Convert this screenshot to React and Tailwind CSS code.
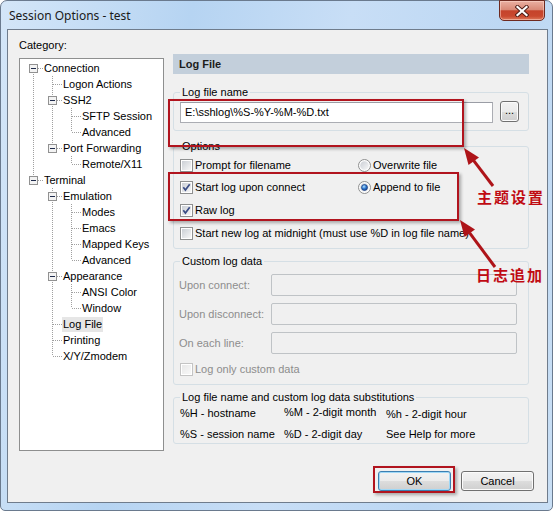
import React, { useId } from "react";

const tree = [
  { t: "Connection", l: 0, anc: [], first: true, next: true, box: true },
  { t: "Logon Actions", l: 1, anc: [true], next: true },
  { t: "SSH2", l: 1, anc: [true], next: true, box: true },
  { t: "SFTP Session", l: 2, anc: [true, true], next: true },
  { t: "Advanced", l: 2, anc: [true, true], next: false },
  { t: "Port Forwarding", l: 1, anc: [true], next: false, box: true },
  { t: "Remote/X11", l: 2, anc: [true, false], next: false },
  { t: "Terminal", l: 0, anc: [], next: false, box: true },
  { t: "Emulation", l: 1, anc: [false], next: true, box: true },
  { t: "Modes", l: 2, anc: [false, true], next: true },
  { t: "Emacs", l: 2, anc: [false, true], next: true },
  { t: "Mapped Keys", l: 2, anc: [false, true], next: true },
  { t: "Advanced", l: 2, anc: [false, true], next: false },
  { t: "Appearance", l: 1, anc: [false], next: true, box: true },
  { t: "ANSI Color", l: 2, anc: [false, true], next: true },
  { t: "Window", l: 2, anc: [false, true], next: false },
  { t: "Log File", l: 1, anc: [false], next: true, sel: true },
  { t: "Printing", l: 1, anc: [false], next: true },
  { t: "X/Y/Zmodem", l: 1, anc: [false], next: false },
];

const DOT = "#a0a0a0";

function TreeRow({ r }) {
  const W = 23 + 19 * r.l;
  const x0 = 13 + 19 * r.l + 0.5;
  return (
    <div className="flex h-4 items-center">
      <svg width={W} height={16} className="flex-none" shapeRendering="crispEdges">
        {r.anc.map((c, i) =>
          c ? (
            <line key={i} x1={13 + 19 * i + 0.5} y1={0} x2={13 + 19 * i + 0.5} y2={16} stroke={DOT} strokeDasharray="1 1" />
          ) : null
        )}
        {!r.first && <line x1={x0} y1={0} x2={x0} y2={8} stroke={DOT} strokeDasharray="1 1" />}
        {r.next && <line x1={x0} y1={8} x2={x0} y2={16} stroke={DOT} strokeDasharray="1 1" />}
        <line x1={x0} y1={8.5} x2={x0 + 10} y2={8.5} stroke={DOT} strokeDasharray="1 1" />
        {r.box && (
          <g>
            <rect x={x0 - 4} y={4.5} width={8} height={8} fill="#f3f3f3" stroke="#919191" />
            <line x1={x0 - 2.5} y1={8.5} x2={x0 + 2.5} y2={8.5} stroke="#1e2a4a" />
          </g>
        )}
      </svg>
      <span className={"px-[1px] leading-[15px] whitespace-nowrap " + (r.sel ? "bg-[#e6e6e6]" : "")}>{r.t}</span>
    </div>
  );
}

function Check({ checked, disabled }) {
  const id = useId();
  return (
    <svg width="13" height="13" className="flex-none">
      <defs>
        <linearGradient id={id} x1="0" y1="0" x2="1" y2="1">
          <stop offset="0" stopColor={disabled ? "#e8e8e8" : "#cbcfd5"} />
          <stop offset="1" stopColor={disabled ? "#f8f8f8" : "#f7f7f7"} />
        </linearGradient>
      </defs>
      <rect x="0.5" y="0.5" width="12" height="12" fill="#fff" stroke={disabled ? "#c4c4c4" : "#8e8f8f"} shapeRendering="crispEdges" />
      <rect x="2" y="2" width="9" height="9" fill={`url(#${id})`} shapeRendering="crispEdges" />
      {checked && (
        <path d="M3.3 6.3 L5.4 9 L9.7 3.3" fill="none" stroke="#3b4d85" strokeWidth="1.7" />
      )}
    </svg>
  );
}

function Radio({ on }) {
  const id = useId();
  const id2 = useId();
  return (
    <svg width="13" height="13" className="flex-none">
      <defs>
        <linearGradient id={id} x1="0" y1="0" x2="1" y2="1">
          <stop offset="0" stopColor="#cbcfd5" />
          <stop offset="1" stopColor="#f7f7f7" />
        </linearGradient>
        <radialGradient id={id2} cx="0.4" cy="0.35" r="0.7">
          <stop offset="0" stopColor="#b8e2fb" />
          <stop offset="0.5" stopColor="#2f7bd2" />
          <stop offset="1" stopColor="#173a80" />
        </radialGradient>
      </defs>
      <circle cx="6.5" cy="6.5" r="6" fill="#fdfdfd" stroke="#8e8f8f" />
      <circle cx="6.5" cy="6.5" r="4.3" fill={`url(#${id})`} />
      {on && <circle cx="6.5" cy="6.5" r="3" fill={`url(#${id2})`} stroke="#1b3f84" strokeWidth="0.7" />}
    </svg>
  );
}

function Group({ title, className, children }) {
  return (
    <div className={"relative border border-[#d5dfe5] rounded-[3px] " + (className || "")}>
      <span className="absolute left-[6px] top-[-7px] px-[2px] leading-[13px] bg-[#f0f0f0] whitespace-nowrap">{title}</span>
      {children}
    </div>
  );
}

function DisabledRow({ label }) {
  return (
    <div className="flex items-center">
      <span className="w-[92px] ml-[5px] text-[#8d8d8d] whitespace-nowrap">{label}</span>
      <div className="w-[246px] h-[22px] border border-[#bfc3c6] rounded-[2px] bg-[#f0f0f0]" />
    </div>
  );
}

function Opt({ children, check, disabled }) {
  return (
    <div className="flex items-center h-4">
      {children}
    </div>
  );
}

export default function App() {
  return (
    <div className="relative w-[553px] h-[511px] bg-white font-['Liberation_Sans',Arial,sans-serif] text-[11px] text-black overflow-hidden">
      {/* window frame */}
      <div className="relative w-[553px] h-[511px] rounded-t-[7px] rounded-b-[5px] border border-[#6a7a8e] bg-[linear-gradient(100deg,#d4e6f8_0%,#b6d4f2_30%,#c8def6_55%,#bcd7f3_80%,#c9dff5_100%)] flex flex-col">
        {/* title bar */}
        <div className="h-[28px] flex-none flex items-start">
          <span className="mt-[6px] ml-[8px] text-[12px] leading-[17px] font-['Noto_Sans',sans-serif] text-[#1a1a1a]">Session Options - test</span>
        </div>
        <div className="absolute top-[-1px] left-[498px] w-[46px] h-[21px] rounded-b-[5px] border border-[#6e2a20] bg-[linear-gradient(180deg,#eab0a2_0%,#d98a77_45%,#c5432b_52%,#c9492f_80%,#de7a5c_100%)] shadow-[inset_0_0_0_1px_rgba(255,220,210,0.5)] flex items-center justify-center">
          <svg width="14" height="12" viewBox="0 0 14 12">
            <path d="M2.5 2 L11.5 10 M11.5 2 L2.5 10" stroke="#4d1d16" strokeWidth="4" strokeLinecap="square" />
            <path d="M2.5 2 L11.5 10 M11.5 2 L2.5 10" stroke="#ffffff" strokeWidth="2.2" strokeLinecap="square" />
          </svg>
        </div>

        {/* client area */}
        <div className="ml-[6px] w-[541px] h-[474px] border border-[#6f7c8c] bg-[#f0f0f0] flex flex-col">
          <div className="flex">
            {/* left column */}
            <div className="ml-[11px] w-[145px] flex-none flex flex-col">
              <div className="mt-[8px] h-[14px] leading-[14px]">Category:</div>
              <div className="mt-[6px] h-[393px] border border-[#8e8f8f] bg-white pt-[1px]">
                {tree.map((r, i) => (
                  <TreeRow key={i} r={r} />
                ))}
              </div>
            </div>

            {/* right column */}
            <div className="ml-[9px] mt-[24px] w-[356px] flex-none flex flex-col">
              <div className="h-[20px] bg-[#c3cfdb] px-[6px] leading-[20px] font-bold text-[#1c1c1c]">Log File</div>

              <Group title="Log file name" className="mt-[18px] h-[39px]">
                <div className="flex mt-[9px] ml-[6px]">
                  <div className="w-[313px] h-[21px] border border-[#abadb3] border-t-[#9a9da5] bg-white pl-[4px] leading-[19px]">E:\sshlog\%S-%Y-%M-%D.txt</div>
                  <div className="ml-[7px] -mt-[1px] w-[19px] h-[21px] rounded-[3px] border border-[#707070] bg-[linear-gradient(180deg,#f2f2f2_0%,#ebebeb_50%,#dddddd_51%,#cfcfcf_100%)] shadow-[inset_0_0_0_1px_#fbfbfb] flex items-center justify-center leading-none pb-[2px]">...</div>
                </div>
              </Group>

              <Group title="Options" className="mt-[15px] h-[103px]">
                <div className="ml-[6px] mt-[10px] flex flex-col">
                  <div className="flex items-center h-4">
                    <div className="w-[178px] flex items-center gap-[2px]"><Check /><span>Prompt for filename</span></div>
                    <div className="flex items-center gap-[2px]"><Radio /><span>Overwrite file</span></div>
                  </div>
                  <div className="flex items-center h-4 mt-[6px]">
                    <div className="w-[178px] flex items-center gap-[2px]"><Check checked /><span>Start log upon connect</span></div>
                    <div className="flex items-center gap-[2px]"><Radio on /><span>Append to file</span></div>
                  </div>
                  <div className="flex items-center h-4 mt-[7px] gap-[2px]"><Check checked /><span>Raw log</span></div>
                  <div className="flex items-center h-4 mt-[7px] gap-[2px]"><Check /><span className="whitespace-nowrap">Start new log at midnight (must use %D in log file name)</span></div>
                </div>
              </Group>

              <Group title="Custom log data" className="mt-[12px] h-[124px]">
                <div className="mt-[12px] flex flex-col gap-[7px]">
                  <DisabledRow label="Upon connect:" />
                  <DisabledRow label="Upon disconnect:" />
                  <DisabledRow label="On each line:" />
                  <div className="flex items-center h-4 ml-[6px] gap-[2px]"><Check disabled /><span className="text-[#8d8d8d]">Log only custom data</span></div>
                </div>
              </Group>

              <Group title="Log file name and custom log data substitutions" className="mt-[12px] h-[47px]">
                <div className="mt-[8px] ml-[6px] grid grid-cols-[104px_102px_1fr] gap-y-[6px] leading-[14px] whitespace-nowrap">
                  <span>%H - hostname</span>
                  <span className="-mt-[1px]">%M - 2-digit month</span>
                  <span className="mt-[1px]">%h - 2-digit hour</span>
                  <span>%S - session name</span>
                  <span>%D - 2-digit day</span>
                  <span>See Help for more</span>
                </div>
              </Group>
            </div>
          </div>

          {/* buttons */}
          <div className="mt-auto mb-[11px] mr-[13px] flex justify-end gap-[10px]">
            <div className="w-[73px] h-[20px] rounded-[3px] border border-[#3c7fb1] bg-[linear-gradient(180deg,#f2f2f2_0%,#ebebeb_50%,#dddddd_51%,#cfcfcf_100%)] shadow-[inset_0_0_0_1px_#9fd8f7] flex items-center justify-center">OK</div>
            <div className="w-[73px] h-[20px] rounded-[3px] border border-[#707070] bg-[linear-gradient(180deg,#f2f2f2_0%,#ebebeb_50%,#dddddd_51%,#cfcfcf_100%)] shadow-[inset_0_0_0_1px_#fbfbfb] flex items-center justify-center">Cancel</div>
          </div>
        </div>
      </div>

      {/* annotations */}
      <div className="absolute left-[168px] top-[99px] w-[296px] h-[48px] border-2 border-[#b1141e] shadow-[2px_2px_3px_rgba(0,0,0,0.3)]" />
      <div className="absolute left-[168px] top-[172px] w-[291px] h-[49px] border-2 border-[#b1141e] shadow-[2px_2px_3px_rgba(0,0,0,0.3)]" />
      <div className="absolute left-[373px] top-[466px] w-[82px] h-[27px] border-2 border-[#b1141e] shadow-[2px_2px_3px_rgba(0,0,0,0.3)]" />

      <svg className="absolute left-0 top-0 pointer-events-none" width="553" height="511">
        <line x1="493" y1="186" x2="473.7" y2="160.7" stroke="#ae1419" strokeWidth="3" />
        <polygon points="464,148 479,157.5 468.5,165" fill="#ae1419" />
        <line x1="495" y1="267" x2="469.6" y2="232.8" stroke="#ae1419" strokeWidth="3" />
        <polygon points="460,220 475,229.5 464.5,237" fill="#ae1419" />
      </svg>

      <span className="absolute left-[477px] top-[187px] text-[15px] leading-[20px] font-bold tracking-[2px] text-[#c00a12] font-['Noto_Sans_CJK_SC',sans-serif] whitespace-nowrap">主题设置</span>
      <span className="absolute left-[476px] top-[265px] text-[15px] leading-[20px] font-bold tracking-[2px] text-[#c00a12] font-['Noto_Sans_CJK_SC',sans-serif] whitespace-nowrap">日志追加</span>
    </div>
  );
}
